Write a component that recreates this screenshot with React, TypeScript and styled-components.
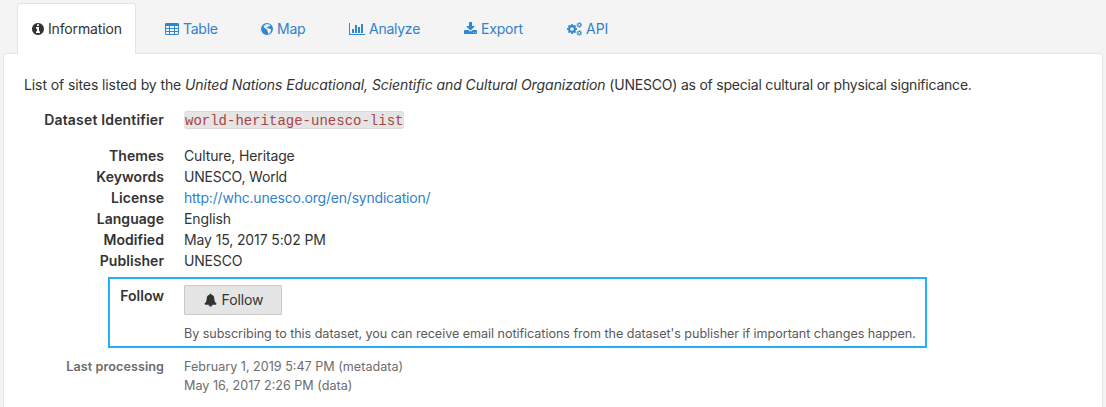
import React from "react";
import styled, { createGlobalStyle } from "styled-components";

const GlobalStyle = createGlobalStyle`
  * { box-sizing: border-box; }
  body {
    margin: 0;
    background: #f4f4f4;
    color: #333;
    font: 14px/21px Inter, "Liberation Sans", sans-serif;
    overflow: hidden;
  }
`;

const Page = styled.main`
  height: 407px;
  padding: 3px 3px 0;
  display: flex;
  flex-direction: column;
  overflow: hidden;
`;

const Tabs = styled.nav`
  display: flex;
  flex: none;
  height: 51px;
  margin: 0 0 -1px 14px;
  z-index: 1;
`;

const Tab = styled.a<{ $active?: boolean; $width: number }>`
  display: flex;
  align-items: center;
  width: ${(p) => p.$width}px;
  padding: 0 0 1px 14px;
  color: ${(p) => (p.$active ? "#333" : "#337fca")};
  background: ${(p) => (p.$active ? "#fff" : "transparent")};
  border: 1px solid ${(p) => (p.$active ? "#e5e5e5" : "transparent")};
  border-bottom: 0;
  border-radius: 3px 3px 0 0;
  white-space: nowrap;

  &:first-child {
    margin-right: 14px;
  }
`;

const Icon = styled.svg<{ $w: number }>`
  flex: none;
  width: ${(p) => p.$w}px;
  height: 14px;
  margin-right: 4px;
  fill: currentColor;
`;

const TabIcon = styled(Icon)<{ $active?: boolean }>`
  color: ${(p) => (p.$active ? "#333" : "#2f87cf")};
`;

const CogsIcon = styled(TabIcon)`
  margin-right: 3px;
  fill: none;
  stroke: currentColor;
`;

const BellIcon = styled(Icon)`
  margin-right: 5px;
`;

const Text = styled.span<{ $track?: number }>`
  letter-spacing: ${(p) => p.$track ?? 0}px;
  white-space: nowrap;
`;

const Panel = styled.section`
  width: 1100px;
  height: 400px;
  flex: none;
  padding: 20px 20px 0;
  background: #fff;
  border: 1px solid #e5e5e5;
  border-radius: 3px;
`;

const Description = styled.p`
  margin: 0 0 14px;
`;

const Row = styled.div<{ $after?: number }>`
  display: grid;
  grid-template-columns: 140px 1fr;
  column-gap: 20px;
  margin-bottom: ${(p) => p.$after ?? 0}px;
`;

const Label = styled.div`
  font-weight: 600;
  text-align: right;
  white-space: nowrap;
`;

const Link = styled.a`
  color: #337fca;
`;

const CodeValue = styled.div`
  display: flex;
  align-items: flex-start;
  height: 21px;
`;

const Code = styled.code`
  height: 18px;
  margin-top: 2px;
  padding: 0 1px;
  font: 14px/18px "Liberation Mono", monospace;
  color: #a94442;
  background: #e5e5e5;
  border: 1px solid #dadada;
  border-width: 1px 0;
  border-radius: 3px;
`;

const FollowBox = styled.div`
  width: 819px;
  height: 71px;
  margin: 6px 0 9px 84px;
  padding: 6px 0 0;
  border: 2px solid #22b1f8;
  display: grid;
  grid-template-columns: 54px 1fr;
  column-gap: 20px;
`;

const FollowButton = styled.button`
  display: flex;
  align-items: center;
  justify-content: center;
  width: 98px;
  height: 30px;
  padding: 0 0 1px 1px;
  border: 1px solid #c9c9c9;
  border-radius: 1px;
  background: #e5e5e5;
  color: #333;
  font: inherit;
`;

const Hint = styled.p`
  margin: 9px 0 0;
  font-size: 12.6px;
  line-height: 19px;
  color: #5a5a5a;
`;

const Processing = styled(Row)`
  font-size: 12.6px;
  line-height: 19px;
  color: #6c6c6c;
`;

const INFO =
  "M1152 1376v-160q0-14-9-23t-23-9h-96v-512q0-14-9-23t-23-9h-320q-14 0-23 9t-9 23v160q0 14 9 23t23 9h96v320h-96q-14 0-23 9t-9 23v160q0 14 9 23t23 9h448q14 0 23-9t9-23zm-128-896v-160q0-14-9-23t-23-9h-192q-14 0-23 9t-9 23v160q0 14 9 23t23 9h192q14 0 23-9t9-23zm640 416q0 209-103 385.5t-279.5 279.5-385.5 103-385.5-103-279.5-279.5-103-385.5 103-385.5 279.5-279.5 385.5-103 385.5 103 279.5 279.5 103 385.5z";
const CHART =
  "M640 896v512h-256v-512h256zm384-512v1024h-256v-1024h256zm1024 1152v128h-2048v-1536h128v1408h1920zm-640-896v768h-256v-768h256zm384-384v1152h-256v-1152h256z";
const DOWNLOAD =
  "M1344 1344q0-26-19-45t-45-19-45 19-19 45 19 45 45 19 45-19 19-45zm256 0q0-26-19-45t-45-19-45 19-19 45 19 45 45 19 45-19 19-45zm128-224v320q0 40-28 68t-68 28h-1472q-40 0-68-28t-28-68v-320q0-40 28-68t68-28h465l135 136q58 56 136 56t136-56l136-136h464q40 0 68 28t28 68zm-325-569q17 41-14 70l-448 448q-18 19-45 19t-45-19l-448-448q-31-29-14-70 17-39 59-39h256v-448q0-26 19-45t45-19h256q26 0 45 19t19 45v448h256q42 0 59 39z";
const BELL =
  "M912 1696q0-16-16-16-59 0-101.5-42.5t-42.5-101.5q0-16-16-16t-16 16q0 73 51.5 124.5t124.5 51.5q16 0 16-16zm816-288q0 52-38 90t-90 38h-448q0 106-75 181t-181 75-181-75-75-181h-448q-52 0-90-38t-38-90q50-42 91-88t85-119.5 74.5-158.5 50-206 19.5-260q0-152 117-282.5t307-158.5q-8-19-8-39 0-40 28-68t68-28 68 28 28 68q0 20-8 39 190 28 307 158.5t117 282.5q0 139 19.5 260t50 206 74.5 158.5 85 119.5 91 88z";

const FIELDS: { label: string; value: string; link?: boolean; track: number }[] = [
  { label: "Themes", value: "Culture, Heritage", track: -0.13 },
  { label: "Keywords", value: "UNESCO, World", track: -0.2 },
  { label: "License", value: "http://whc.unesco.org/en/syndication/", link: true, track: -0.2 },
  { label: "Language", value: "English", track: -0.1 },
  { label: "Modified", value: "May 15, 2017 5:02 PM", track: -0.12 },
  { label: "Publisher", value: "UNESCO", track: -0.18 },
];

function Cog({ cx, cy, ring, ringWidth, teeth, toothWidth }: {
  cx: number; cy: number; ring: number; ringWidth: number; teeth: number; toothWidth: number;
}) {
  return (
    <>
      <circle cx={cx} cy={cy} r={ring} strokeWidth={ringWidth} />
      <circle cx={cx} cy={cy} r={teeth} strokeWidth={toothWidth} pathLength={16} strokeDasharray="1 1" strokeDashoffset={0.5} />
    </>
  );
}

export default function App() {
  return (
    <>
      <GlobalStyle />
      <Page>
        <Tabs>
          <Tab $active $width={119}>
            <TabIcon $active $w={12} viewBox="128 0 1536 1792"><path d={INFO} /></TabIcon>
            <Text $track={-0.15}>Information</Text>
          </Tab>
          <Tab $width={96}>
            <TabIcon $w={14} viewBox="0 0 14 14">
              <path fillRule="evenodd" d="M1.2 1h11.6q1.2 0 1.2 1.2v9.6q0 1.2-1.2 1.2h-11.6q-1.2 0-1.2-1.2v-9.6q0-1.2 1.2-1.2zM1 4v2h3V4zM5 4v2h4V4zM10 4v2h3V4zM1 7v2h3V7zM5 7v2h4V7zM10 7v2h3V7zM1 10v2h3V10zM5 10v2h4V10zM10 10v2h3V10z" />
            </TabIcon>
            <Text $track={-0.25}>Table</Text>
          </Tab>
          <Tab $width={88}>
            <TabIcon $w={12} viewBox="0 0 12 14">
              <path fillRule="evenodd" d="M6 1a6 6 0 1 1 0 12a6 6 0 0 1 0-12zM6.3 2l1.1.5 1.1-.1 1 1-.7.8-1.1-.1-.8.8-1.3.8.2.8 1.2-.4 1.1.7 1.5.2.8 1.1-.8 1.1-.5 1.5-1.6 1.4-.6-.4.2-1.5-.8-1.2.1-1.3-1.4-.4-1-1.1-1.3-.9-.3-.4 1-1.5 1.2-.8z" />
            </TabIcon>
            <Text $track={-0.25}>Map</Text>
          </Tab>
          <Tab $width={115}>
            <TabIcon $w={16} viewBox="0 0 2048 1792"><path d={CHART} /></TabIcon>
            <Text $track={-0.25}>Analyze</Text>
          </Tab>
          <Tab $width={103}>
            <TabIcon $w={13} viewBox="64 0 1664 1792"><path d={DOWNLOAD} /></TabIcon>
            <Text $track={-0.2}>Export</Text>
          </Tab>
          <Tab $width={80}>
            <CogsIcon $w={16} viewBox="0 0 16 14">
              <Cog cx={5} cy={7} ring={2.9} ringWidth={2.1} teeth={4.3} toothWidth={1.5} />
              <Cog cx={12.3} cy={3} ring={1.5} ringWidth={1.2} teeth={2.4} toothWidth={1} />
              <Cog cx={12.3} cy={11} ring={1.5} ringWidth={1.2} teeth={2.4} toothWidth={1} />
            </CogsIcon>
            <Text>API</Text>
          </Tab>
        </Tabs>
        <Panel>
          <Description>
            <Text $track={-0.1}>List of sites listed by the </Text>
            <Text as="em" $track={-0.065}>United Nations Educational, Scientific and Cultural Organization</Text>
            <Text $track={-0.21}> (UNESCO) as of special cultural or physical significance.</Text>
          </Description>
          <Row $after={15}>
            <Label><Text $track={0.17}>Dataset Identifier</Text></Label>
            <CodeValue><Code>world-heritage-unesco-list</Code></CodeValue>
          </Row>
          {FIELDS.map((f) => (
            <Row key={f.label}>
              <Label><Text $track={0.05}>{f.label}</Text></Label>
              <Text $track={f.track}>{f.link ? <Link>{f.value}</Link> : f.value}</Text>
            </Row>
          ))}
          <FollowBox>
            <Label><Text>Follow</Text></Label>
            <div>
              <FollowButton>
                <BellIcon $w={13} viewBox="0 0 1792 1792"><path d={BELL} /></BellIcon>
                <Text $track={-0.1}>Follow</Text>
              </FollowButton>
              <Hint>
                <Text $track={-0.05}>By subscribing to this dataset, you can receive email notifications from the dataset's publisher if important changes happen.</Text>
              </Hint>
            </div>
          </FollowBox>
          <Processing>
            <Label><Text $track={0.07}>Last processing</Text></Label>
            <div>
              <Text as="div">February 1, 2019 5:47 PM (metadata)</Text>
              <Text as="div">May 16, 2017 2:26 PM (data)</Text>
            </div>
          </Processing>
        </Panel>
      </Page>
    </>
  );
}
